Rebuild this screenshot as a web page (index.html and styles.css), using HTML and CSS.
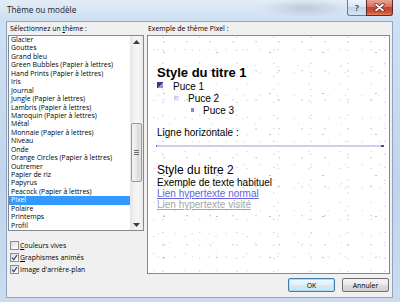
FILE: index.html
```html
<!DOCTYPE html>
<html lang="fr">
<head>
    <meta charset="UTF-8">
    <title>Thème ou modèle</title>
    <link rel="stylesheet" href="styles.css">
</head>
<body>
    <div class="window">
        <div class="titlebar">
            <span class="title">Thème ou modèle</span>
            <div class="caption-buttons">
                <div class="btn-help">?</div>
                <div class="btn-close">
                    <svg width="11" height="9" viewBox="0 0 11 9">
                        <path d="M2 1.5 L9 7.5 M9 1.5 L2 7.5" stroke="#5a1f16" stroke-width="3.2" stroke-linecap="round"/>
                        <path d="M2 1.5 L9 7.5 M9 1.5 L2 7.5" stroke="#ffffff" stroke-width="1.8" stroke-linecap="round"/>
                    </svg>
                </div>
            </div>
        </div>

        <div class="client">
            <div class="columns">
                <div class="left">
                    <div class="label">Sélectionnez un <u>t</u>hème :</div>
                    <div class="listbox">
                        <ul class="items">
                            <li>Glacier</li>
                            <li>Gouttes</li>
                            <li>Grand bleu</li>
                            <li>Green Bubbles (Papier à lettres)</li>
                            <li>Hand Prints (Papier à lettres)</li>
                            <li>Iris</li>
                            <li>Journal</li>
                            <li>Jungle (Papier à lettres)</li>
                            <li>Lambris (Papier à lettres)</li>
                            <li>Maroquin (Papier à lettres)</li>
                            <li>Métal</li>
                            <li>Monnaie (Papier à lettres)</li>
                            <li>Niveau</li>
                            <li>Onde</li>
                            <li>Orange Circles (Papier à lettres)</li>
                            <li>Outremer</li>
                            <li>Papier de riz</li>
                            <li>Papyrus</li>
                            <li>Peacock (Papier à lettres)</li>
                            <li class="selected">Pixel</li>
                            <li>Polaire</li>
                            <li>Printemps</li>
                            <li>Profil</li>
                        </ul>
                        <div class="scrollbar">
                            <div class="arrow">
                                <svg width="7" height="4" viewBox="0 0 7 4"><path d="M0 4 L3.5 0 L7 4 Z" fill="#3d3d3d"/></svg>
                            </div>
                            <div class="thumb"><span class="grip"></span></div>
                            <div class="arrow arrow-down">
                                <svg width="7" height="4" viewBox="0 0 7 4"><path d="M0 0 L3.5 4 L7 0 Z" fill="#3d3d3d"/></svg>
                            </div>
                        </div>
                    </div>
                    <div class="options">
                        <label class="check">
                            <span class="box"></span>
                            <span><u>C</u>ouleurs vives</span>
                        </label>
                        <label class="check">
                            <span class="box">
                                <svg width="7" height="7" viewBox="0 0 7 7"><path d="M1 3.6 L2.8 5.6 L6 1" fill="none" stroke="#3c4f86" stroke-width="1.3"/></svg>
                            </span>
                            <span><u>G</u>raphismes animés</span>
                        </label>
                        <label class="check">
                            <span class="box">
                                <svg width="7" height="7" viewBox="0 0 7 7"><path d="M1 3.6 L2.8 5.6 L6 1" fill="none" stroke="#3c4f86" stroke-width="1.3"/></svg>
                            </span>
                            <span>Image d'arrière-plan</span>
                        </label>
                    </div>
                </div>

                <div class="right">
                    <div class="label">Exemple de thème Pixel :</div>
                    <div class="preview">
                        <div class="h1">Style du titre 1</div>
                        <div class="bullets">
                            <div class="bullet-row"><span class="dot dot-1"></span>Puce 1</div>
                            <div class="bullet-row"><span class="dot dot-2"></span>Puce 2</div>
                            <div class="bullet-row"><span class="dot dot-3"></span>Puce 3</div>
                        </div>
                        <div class="ligne">Ligne horizontale :</div>
                        <div class="hr"></div>
                        <div class="h2">Style du titre 2</div>
                        <div class="text">Exemple de texte habituel</div>
                        <div class="text link">Lien hypertexte normal</div>
                        <div class="text visited">Lien hypertexte visité</div>
                    </div>
                </div>
            </div>

            <div class="actions">
                <button class="btn default">OK</button>
                <button class="btn">Annuler</button>
            </div>
        </div>
    </div>
</body>
</html>
```

FILE: styles.css
```css
body {
    margin: 0;
    width: 400px;
    height: 302px;
    overflow: hidden;
    font-family: 'Open Sans', 'Noto Sans', sans-serif;
}

.window {
    height: 302px;
    box-sizing: border-box;
    padding: 0 7px 4px 6px;
    display: flex;
    flex-direction: column;
    background:
        radial-gradient(ellipse 45px 9px at 305px 8px, rgba(120, 135, 155, 0.3), transparent),
        linear-gradient(to bottom, #e2edf8, #cfe0f2 18px, #c0d5ec 60%, #c9dcf0);
}

.titlebar {
    height: 21px;
    display: flex;
    align-items: flex-start;
}

.title {
    font-size: 8.2px;
    line-height: 10px;
    margin: 5px 0 0 1px;
    color: #1b1b1b;
}

.caption-buttons {
    margin-left: auto;
    display: flex;
}

.btn-help {
    width: 19px;
    height: 16px;
    box-sizing: border-box;
    border: 1px solid #6c7d93;
    border-top: none;
    border-right: none;
    border-radius: 0 0 0 3px;
    background: linear-gradient(to bottom, #eef4fa, #dae6f2 45%, #c2d4e8 50%, #d3e3f3);
    color: #3e4d60;
    font-size: 9px;
    font-weight: bold;
    line-height: 15px;
    text-align: center;
    text-shadow: 0 0 2px #fff;
}

.btn-close {
    width: 27px;
    height: 16px;
    box-sizing: border-box;
    border: 1px solid #5b2c25;
    border-top: none;
    border-radius: 0 0 3px 0;
    background: linear-gradient(to bottom, #e8a596, #d9705e 45%, #c6452f 50%, #cf4f31 80%, #e2835f);
    display: flex;
    align-items: center;
    justify-content: center;
}

.client {
    flex: 1;
    background: #f0f0f0;
    border: 1px solid #8ea4c1;
    padding: 0 2px 0 1px;
    display: flex;
    flex-direction: column;
}

.columns {
    display: flex;
    gap: 3px;
}

.left {
    width: 136px;
}

.right {
    flex: 1;
}

.label {
    height: 13px;
    box-sizing: border-box;
    padding: 2px 0 0 2px;
    font-size: 6.9px;
    line-height: 10px;
    color: #000;
    white-space: nowrap;
}

.right .label {
    padding-left: 1px;
}

.listbox {
    height: 196px;
    box-sizing: border-box;
    border: 1px solid #828790;
    background: #fff;
    display: flex;
}

.items {
    flex: 1;
    list-style: none;
    margin: 0;
    padding: 0;
    font-size: 6.9px;
    overflow: hidden;
}

.items li {
    height: 8.45px;
    line-height: 8.45px;
    padding-left: 2px;
    white-space: nowrap;
}

.items li.selected {
    background: #3399ff;
    color: #fff;
}

.scrollbar {
    width: 13px;
    display: flex;
    flex-direction: column;
    background: linear-gradient(to right, #e5e5e5, #f4f4f4 40%, #f4f4f4 70%, #e9e9e9);
}

.arrow {
    height: 11px;
    display: flex;
    align-items: center;
    justify-content: center;
}

.arrow-down {
    margin-top: auto;
}

.thumb {
    margin: 76px 0 0 1px;
    width: 11px;
    height: 59px;
    box-sizing: border-box;
    border: 1px solid #979797;
    border-radius: 2px;
    background: linear-gradient(to right, #f4f4f4, #e8e8e8 50%, #d9d9d9 51%, #e4e4e4);
    display: flex;
    align-items: center;
    justify-content: center;
}

.grip {
    width: 5px;
    height: 5px;
    background: repeating-linear-gradient(to bottom, #6e6e6e 0, #6e6e6e 1px, transparent 1px, transparent 2px);
}

.options {
    margin-top: 8px;
}

.check {
    height: 12px;
    display: flex;
    align-items: center;
    gap: 1px;
    padding-left: 2px;
    font-size: 6.9px;
    color: #000;
}

.box {
    width: 9px;
    height: 9px;
    box-sizing: border-box;
    border: 1px solid #8e8f8f;
    background: linear-gradient(135deg, #d8d8d8, #f6f6f6 70%, #ffffff);
    display: flex;
    align-items: center;
    justify-content: center;
}

.preview {
    height: 239px;
    box-sizing: border-box;
    border: 1px solid #828790;
    padding: 29px 5px 0 9px;
    font-family: 'Liberation Sans', Arial, sans-serif;
    color: #000;
    background-color: #fff;
    background-image:
        radial-gradient(circle at 30% 40%, #8ed5e0 0.6px, transparent 1px),
        radial-gradient(circle at 70% 20%, #d8d2f2 0.6px, transparent 1px),
        radial-gradient(circle at 20% 80%, #e2ddf5 0.6px, transparent 1px),
        radial-gradient(circle at 60% 60%, #e8e4f7 0.6px, transparent 1px),
        radial-gradient(circle at 40% 10%, #dcd6f3 0.6px, transparent 1px),
        radial-gradient(circle at 50% 50%, #b5e3eb 0.6px, transparent 1px);
    background-size: 53px 41px, 23px 29px, 31px 17px, 17px 23px, 37px 13px, 43px 59px;
}

.h1 {
    font-size: 13px;
    font-weight: bold;
    line-height: 16px;
}

.bullets {
    font-size: 10px;
    line-height: 12px;
}

.bullet-row {
    display: flex;
    align-items: flex-start;
}

.dot {
    display: block;
}

.dot-1 {
    width: 6px;
    height: 6px;
    margin: 1px 10px 0 0;
    background: linear-gradient(135deg, #3a3a8c 55%, #9494d4 55%);
}

.dot-2 {
    width: 5px;
    height: 5px;
    margin: 3px 9px 0 17px;
    background: linear-gradient(135deg, #c9c9ee 50%, #e6e6f8 50%);
}

.dot-3 {
    width: 3px;
    height: 4px;
    margin: 3px 9px 0 34px;
    background: #8b8bd0;
}

.ligne {
    font-size: 10px;
    line-height: 12px;
    margin-top: 10px;
}

.hr {
    height: 2px;
    margin: 6px 0 0 -1px;
    background: linear-gradient(to right, #6a6ab8 0, #6a6ab8 1px, #cdcdef 1px, #cdcdef calc(100% - 3px), #4a4a96 calc(100% - 3px));
}

.h2 {
    font-size: 12px;
    line-height: 14px;
    margin-top: 16px;
}

.text {
    font-size: 10px;
    line-height: 11px;
    white-space: nowrap;
}

.link {
    color: #6464dc;
    text-decoration: underline;
}

.visited {
    color: #a6a6a6;
    text-decoration: underline;
}

.actions {
    margin-top: 3px;
    padding-right: 1px;
    display: flex;
    justify-content: flex-end;
    gap: 7px;
}

.btn {
    width: 47px;
    height: 14px;
    padding: 0;
    box-sizing: border-box;
    border: 1px solid #707070;
    border-radius: 2px;
    background: linear-gradient(to bottom, #f3f3f3, #ebebeb 45%, #dddddd 50%, #d0d0d0);
    font-family: 'Open Sans', 'Noto Sans', sans-serif;
    font-size: 6.9px;
    color: #000;
}

.btn.default {
    border-color: #3c7fb1;
    box-shadow: inset 0 0 0 1px #a8def8;
    background: linear-gradient(to bottom, #f2f8fc, #e6f1f8 45%, #d7e8f2 50%, #cfe2ee);
}
```
